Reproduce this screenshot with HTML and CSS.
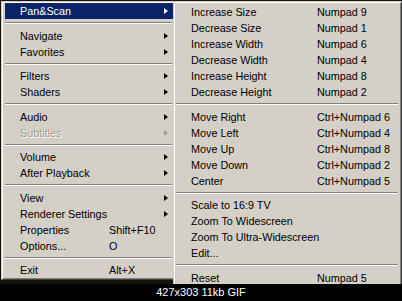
FILE: index.html
```html
<!DOCTYPE html>
<html>
<head>
<meta charset="utf-8">
<link rel="stylesheet" href="styles.css">
</head>
<body>
<div class="screen">
  <div class="menus">
    <div class="menu main">
      <div class="item active"><span class="label">Pan&amp;Scan</span><span class="key"></span><span class="arrow"></span></div>
      <div class="sep"></div>
      <div class="item"><span class="label">Navigate</span><span class="key"></span><span class="arrow"></span></div>
      <div class="item"><span class="label">Favorites</span><span class="key"></span><span class="arrow"></span></div>
      <div class="sep"></div>
      <div class="item"><span class="label">Filters</span><span class="key"></span><span class="arrow"></span></div>
      <div class="item"><span class="label">Shaders</span><span class="key"></span><span class="arrow"></span></div>
      <div class="sep"></div>
      <div class="item"><span class="label">Audio</span><span class="key"></span><span class="arrow"></span></div>
      <div class="item disabled"><span class="label">Subtitles</span><span class="key"></span><span class="arrow"></span></div>
      <div class="sep"></div>
      <div class="item"><span class="label">Volume</span><span class="key"></span><span class="arrow"></span></div>
      <div class="item"><span class="label">After Playback</span><span class="key"></span><span class="arrow"></span></div>
      <div class="sep"></div>
      <div class="item"><span class="label">View</span><span class="key"></span><span class="arrow"></span></div>
      <div class="item"><span class="label">Renderer Settings</span><span class="key"></span><span class="arrow"></span></div>
      <div class="item"><span class="label">Properties</span><span class="key">Shift+F10</span><span class="noarrow"></span></div>
      <div class="item"><span class="label">Options...</span><span class="key">O</span><span class="noarrow"></span></div>
      <div class="sep"></div>
      <div class="item"><span class="label">Exit</span><span class="key">Alt+X</span><span class="noarrow"></span></div>
    </div>
    <div class="menu sub">
      <div class="item"><span class="label">Increase Size</span><span class="key">Numpad 9</span></div>
      <div class="item"><span class="label">Decrease Size</span><span class="key">Numpad 1</span></div>
      <div class="item"><span class="label">Increase Width</span><span class="key">Numpad 6</span></div>
      <div class="item"><span class="label">Decrease Width</span><span class="key">Numpad 4</span></div>
      <div class="item"><span class="label">Increase Height</span><span class="key">Numpad 8</span></div>
      <div class="item"><span class="label">Decrease Height</span><span class="key">Numpad 2</span></div>
      <div class="sep"></div>
      <div class="item"><span class="label">Move Right</span><span class="key">Ctrl+Numpad 6</span></div>
      <div class="item"><span class="label">Move Left</span><span class="key">Ctrl+Numpad 4</span></div>
      <div class="item"><span class="label">Move Up</span><span class="key">Ctrl+Numpad 8</span></div>
      <div class="item"><span class="label">Move Down</span><span class="key">Ctrl+Numpad 2</span></div>
      <div class="item"><span class="label">Center</span><span class="key">Ctrl+Numpad 5</span></div>
      <div class="sep"></div>
      <div class="item"><span class="label">Scale to 16:9 TV</span><span class="key"></span></div>
      <div class="item"><span class="label">Zoom To Widescreen</span><span class="key"></span></div>
      <div class="item"><span class="label">Zoom To Ultra-Widescreen</span><span class="key"></span></div>
      <div class="item"><span class="label">Edit...</span><span class="key"></span></div>
      <div class="sep"></div>
      <div class="item"><span class="label">Reset</span><span class="key">Numpad 5</span></div>
    </div>
  </div>
  <div class="caption">427x303 11kb GIF</div>
</div>
</body>
</html>
```
FILE: styles.css
```css
html, body {
  margin: 0;
  padding: 0;
  background: #000;
}
body {
  width: 402px;
  height: 301px;
  overflow: hidden;
  font-family: "Liberation Sans", Arial, sans-serif;
  font-size: 10.8px;
  color: #000;
}
.screen {
  display: flex;
  flex-direction: column;
  width: 402px;
  height: 301px;
}
.menus {
  display: flex;
  align-items: flex-start;
  height: 283px;
  padding: 1px 0 0 1px;
  overflow: hidden;
  background: #17130b;
}
.menu {
  background: #d4d0c8;
  box-sizing: border-box;
  border: 1px solid;
  border-color: #d4d0c8 #404040 #404040 #d4d0c8;
  box-shadow: inset 1px 1px #fff, inset -1px -1px #808080;
}
.main {
  width: 172px;
  padding: 1px 0 1px 3px;
  border-right: 0;
  box-shadow: inset 1px 1px #fff, inset 0 -1px #808080;
}
.sub {
  flex: 1;
  padding: 2px 2px 2px 2px;
}
.item {
  display: flex;
  align-items: center;
  height: 16px;
  line-height: 16px;
  white-space: nowrap;
}
.main .item {
  padding-left: 15px;
}
.main .label {
  width: 89px;
}
.main .key {
  width: 55px;
}
.sub .item {
  padding-left: 15px;
}
.sub .label {
  width: 126px;
}
.arrow {
  width: 0;
  height: 0;
  border-left: 4px solid #000;
  border-top: 3.5px solid transparent;
  border-bottom: 3.5px solid transparent;
}
.active {
  background: #0a246a;
  color: #fff;
}
.active .arrow {
  border-left-color: #fff;
}
.disabled {
  color: #a09d96;
  text-shadow: 1px 1px #fff;
}
.disabled .arrow {
  border-left-color: #a09d96;
}
.sep {
  height: 8.5px;
  box-sizing: border-box;
  padding-top: 3px;
  margin: 0 1px 0 0;
}
.sep::before {
  content: "";
  display: block;
  height: 1px;
  background: #808080;
  border-bottom: 1px solid #fff;
}
.caption {
  height: 17px;
  line-height: 17px;
  background: #000;
  color: #fff;
  font-size: 11px;
  text-align: center;
}
```
